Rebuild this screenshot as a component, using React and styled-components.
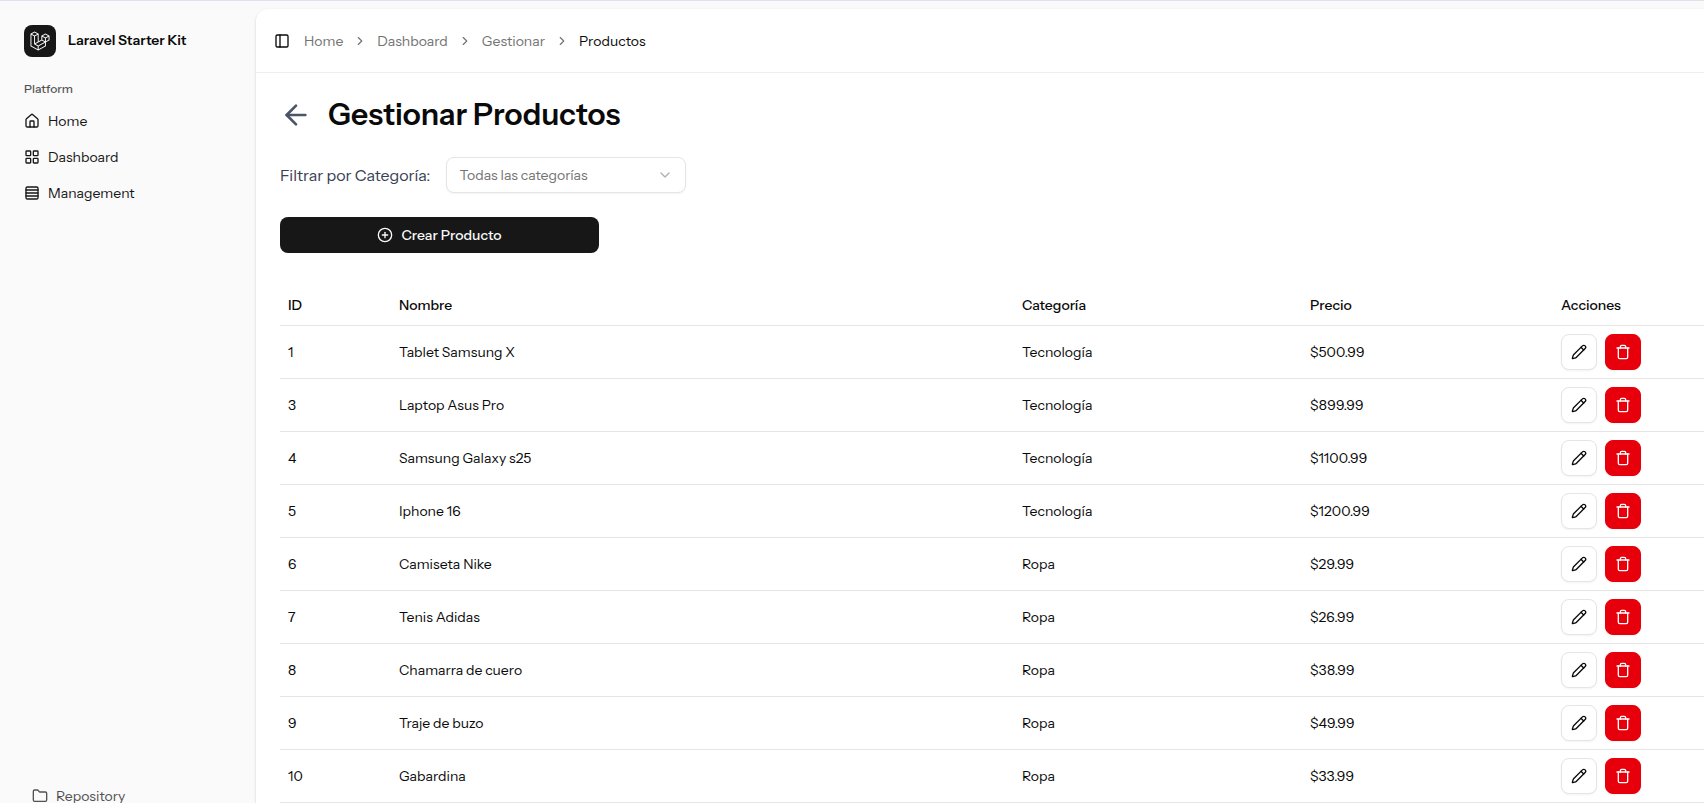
import React from "react";
import styled, { createGlobalStyle, css } from "styled-components";
import {
  ArrowLeft, ChevronDown, ChevronRight, CirclePlus, Folder, House,
  LayoutGrid, PanelLeft, Pencil, Rows4, Trash,
} from "lucide-react";

const GlobalStyle = createGlobalStyle`
  *, *::before, *::after { box-sizing: border-box; }
  body {
    margin: 0;
    background: #fafafa;
    color: #0a0a0a;
    font-family: "Instrument Sans", Inter, "Liberation Sans", sans-serif;
    font-size: 14px;
    line-height: 20px;
  }
  button, select { font: inherit; color: inherit; }
  a { color: inherit; text-decoration: none; }
  svg { flex-shrink: 0; display: block; }
`;

const Shell = styled.div`
  display: flex;
  height: 100vh;
  overflow: hidden;
  border-top: 1px solid #dfe1ee;
`;

const Sidebar = styled.aside`
  display: flex;
  flex-direction: column;
  flex: 0 0 256px;
  padding: 16px 16px 0;
`;

const Brand = styled.a`
  display: flex;
  align-items: center;
  gap: 12px;
  height: 48px;
  padding: 0 8px;
  font-weight: 600;
`;

const BrandName = styled.span`
  padding-bottom: 2px;
`;

const BrandMark = styled.span`
  display: grid;
  place-items: center;
  width: 32px;
  height: 32px;
  border-radius: 8px;
  background: #171717;
  color: #fff;
`;

const Nav = styled.nav`
  display: flex;
  flex-direction: column;
  flex: 1;
  gap: 4px;
  padding-top: 8px;
`;

const NavHeading = styled.h2`
  display: flex;
  align-items: center;
  height: 32px;
  margin: 0 0 -4px;
  padding: 0 8px;
  color: #0a0a0a;
  opacity: 0.7;
  font-size: 12px;
  font-weight: 500;
`;

const NavLink = styled.a`
  display: flex;
  align-items: center;
  gap: 8px;
  height: 32px;
  padding: 0 8px;
  color: ${(p) => (p.$muted ? "#525252" : "#171717")};
`;

const SidebarFooter = styled.footer`
  flex-shrink: 0;
  height: 23px;
  padding: 0 8px;
`;

const Inset = styled.main`
  flex: 1;
  min-width: 0;
  margin-top: 8px;
  border-top-left-radius: 12px;
  background: #fff;
  box-shadow: 0 1px 3px rgba(0, 0, 0, 0.1), 0 1px 2px rgba(0, 0, 0, 0.1);
`;

const TopBar = styled.header`
  display: flex;
  align-items: center;
  gap: 8px;
  height: 64px;
  padding: 0 12px;
  border-bottom: 1px solid #efefef;
`;

const ToggleButton = styled.button`
  display: grid;
  place-items: center;
  width: 28px;
  height: 28px;
  padding: 0;
  border: 0;
  background: none;
`;

const Crumbs = styled.ol`
  display: flex;
  align-items: center;
  gap: 10px;
  margin: 0;
  padding: 0;
  list-style: none;
  color: #737373;
`;

const Crumb = styled.li`
  display: flex;
  align-items: center;
  gap: 10px;
  color: ${(p) => (p.$current ? "#0a0a0a" : "inherit")};
`;

const Content = styled.div`
  padding: 24px 0 0 24px;
`;

const TitleRow = styled.div`
  display: flex;
  align-items: center;
  gap: 16px;
  color: #0a0a0a;
`;

const BackLink = styled.a`
  color: #4a5565;
`;

const Title = styled.h1`
  margin: 0;
  font-size: 30px;
  line-height: 36px;
  font-weight: 600;
`;

const FilterRow = styled.div`
  display: flex;
  align-items: center;
  gap: 16px;
  margin: 24px 0;
`;

const FilterLabel = styled.label`
  color: #364153;
  font-size: 16px;
`;

const SelectBox = styled.div`
  display: grid;
  align-items: center;
  width: 240px;

  > * { grid-area: 1 / 1; }
  > svg {
    justify-self: end;
    margin-right: 13px;
    color: #b0b0b0;
    pointer-events: none;
  }
`;

const Select = styled.select`
  width: 100%;
  height: 36px;
  padding: 0 36px 0 12px;
  border: 1px solid #e5e5e5;
  border-radius: 8px;
  appearance: none;
  background: #fff;
  color: #737373;
  box-shadow: 0 1px 2px rgba(0, 0, 0, 0.05);
`;

const CreateButton = styled.button`
  display: flex;
  align-items: center;
  justify-content: center;
  gap: 8px;
  width: 319px;
  height: 36px;
  border: 0;
  border-radius: 8px;
  background: #171717;
  color: #fafafa;
  font-weight: 500;
`;

const Table = styled.table`
  width: 100%;
  margin-top: 32px;
  border-collapse: separate;
  border-spacing: 0;
  table-layout: fixed;
`;

const cell = css`
  padding: 0 8px;
  border-bottom: 1px solid #e5e5e5;
  text-align: left;
`;

const HeadCell = styled.th`
  ${cell}
  width: ${(p) => p.$width || "auto"};
  height: 41px;
  font-weight: 500;
`;

const Cell = styled.td`
  ${cell}
  height: 53px;
`;

const Actions = styled.div`
  display: flex;
  gap: 8px;
`;

const IconButton = styled.button`
  display: grid;
  place-items: center;
  width: 36px;
  height: 36px;
  padding: 0;
  border: 1px solid ${(p) => (p.$danger ? "#e7000b" : "#e5e5e5")};
  border-radius: 8px;
  background: ${(p) => (p.$danger ? "#e7000b" : "#fff")};
  color: ${(p) => (p.$danger ? "#fff" : "#0a0a0a")};
  box-shadow: 0 1px 2px rgba(0, 0, 0, 0.05);
`;

const LaravelMark = () => (
  <svg width="20" height="20" viewBox="0 0 40 42" fill="currentColor" aria-hidden="true">
    <path
      fillRule="evenodd"
      clipRule="evenodd"
      d="M17.2 5.633 8.6.855 0 5.633v26.51l16.2 9 16.2-9v-8.442l7.6-4.223V9.856l-8.6-4.777-8.6 4.777V18.3l-5.6 3.111V5.633ZM38 18.301l-5.6 3.11v-6.157l5.6-3.11V18.3Zm-1.06-7.856-5.54 3.078-5.54-3.079 5.54-3.078 5.54 3.079ZM24.8 18.3v-6.157l5.6 3.111v6.158L24.8 18.3Zm-1 1.732 5.54 3.078-13.14 7.302-5.54-3.078 13.14-7.3v-.002Zm-16.2 7.89 7.6 4.222V38.3L2 30.966V7.92l5.6 3.111v16.892ZM8.6 9.3 3.06 6.222 8.6 3.143l5.54 3.08L8.6 9.3Zm21.8 15.51-13.2 7.334V38.3l13.2-7.334v-6.156ZM9.6 11.034l5.6-3.11v14.6l-5.6 3.11v-14.6Z"
    />
  </svg>
);

const navItems = [
  { label: "Home", icon: House },
  { label: "Dashboard", icon: LayoutGrid },
  { label: "Management", icon: Rows4 },
];

const trail = ["Home", "Dashboard", "Gestionar"];

const columns = [
  { label: "ID", width: "111px" },
  { label: "Nombre" },
  { label: "Categoría", width: "288px" },
  { label: "Precio", width: "251px" },
  { label: "Acciones", width: "151px" },
];

const products = [
  { id: 1, name: "Tablet Samsung X", category: "Tecnología", price: "500.99" },
  { id: 3, name: "Laptop Asus Pro", category: "Tecnología", price: "899.99" },
  { id: 4, name: "Samsung Galaxy s25", category: "Tecnología", price: "1100.99" },
  { id: 5, name: "Iphone 16", category: "Tecnología", price: "1200.99" },
  { id: 6, name: "Camiseta Nike", category: "Ropa", price: "29.99" },
  { id: 7, name: "Tenis Adidas", category: "Ropa", price: "26.99" },
  { id: 8, name: "Chamarra de cuero", category: "Ropa", price: "38.99" },
  { id: 9, name: "Traje de buzo", category: "Ropa", price: "49.99" },
  { id: 10, name: "Gabardina", category: "Ropa", price: "33.99" },
];

export default function App() {
  return (
    <>
      <GlobalStyle />
      <Shell>
        <Sidebar>
          <Brand href="#">
            <BrandMark><LaravelMark /></BrandMark>
            <BrandName>Laravel Starter Kit</BrandName>
          </Brand>
          <Nav>
            <NavHeading>Platform</NavHeading>
            {navItems.map(({ label, icon: Icon }) => (
              <NavLink href="#" key={label}>
                <Icon size={16} />
                {label}
              </NavLink>
            ))}
          </Nav>
          <SidebarFooter>
            <NavLink href="#" $muted>
              <Folder size={16} />
              Repository
            </NavLink>
          </SidebarFooter>
        </Sidebar>
        <Inset>
          <TopBar>
            <ToggleButton type="button" aria-label="Toggle sidebar">
              <PanelLeft size={16} />
            </ToggleButton>
            <nav aria-label="Breadcrumb">
              <Crumbs>
                {trail.map((label) => (
                  <Crumb key={label}>
                    <a href="#">{label}</a>
                    <ChevronRight size={14} />
                  </Crumb>
                ))}
                <Crumb $current aria-current="page">Productos</Crumb>
              </Crumbs>
            </nav>
          </TopBar>
          <Content>
            <TitleRow>
              <BackLink href="#" aria-label="Volver"><ArrowLeft size={32} /></BackLink>
              <Title>Gestionar Productos</Title>
            </TitleRow>
            <FilterRow>
              <FilterLabel htmlFor="category">Filtrar por Categoría:</FilterLabel>
              <SelectBox>
                <Select id="category" defaultValue="all">
                  <option value="all">Todas las categorías</option>
                  <option value="tec">Tecnología</option>
                  <option value="ropa">Ropa</option>
                </Select>
                <ChevronDown size={16} />
              </SelectBox>
            </FilterRow>
            <CreateButton type="button">
              <CirclePlus size={16} />
              Crear Producto
            </CreateButton>
            <Table>
              <thead>
                <tr>
                  {columns.map((c) => (
                    <HeadCell key={c.label} $width={c.width} scope="col">{c.label}</HeadCell>
                  ))}
                </tr>
              </thead>
              <tbody>
                {products.map((p) => (
                  <tr key={p.id}>
                    <Cell>{p.id}</Cell>
                    <Cell>{p.name}</Cell>
                    <Cell>{p.category}</Cell>
                    <Cell>${p.price}</Cell>
                    <Cell>
                      <Actions>
                        <IconButton type="button" aria-label={`Editar ${p.name}`}>
                          <Pencil size={16} />
                        </IconButton>
                        <IconButton type="button" $danger aria-label={`Eliminar ${p.name}`}>
                          <Trash size={16} />
                        </IconButton>
                      </Actions>
                    </Cell>
                  </tr>
                ))}
              </tbody>
            </Table>
          </Content>
        </Inset>
      </Shell>
    </>
  );
}
